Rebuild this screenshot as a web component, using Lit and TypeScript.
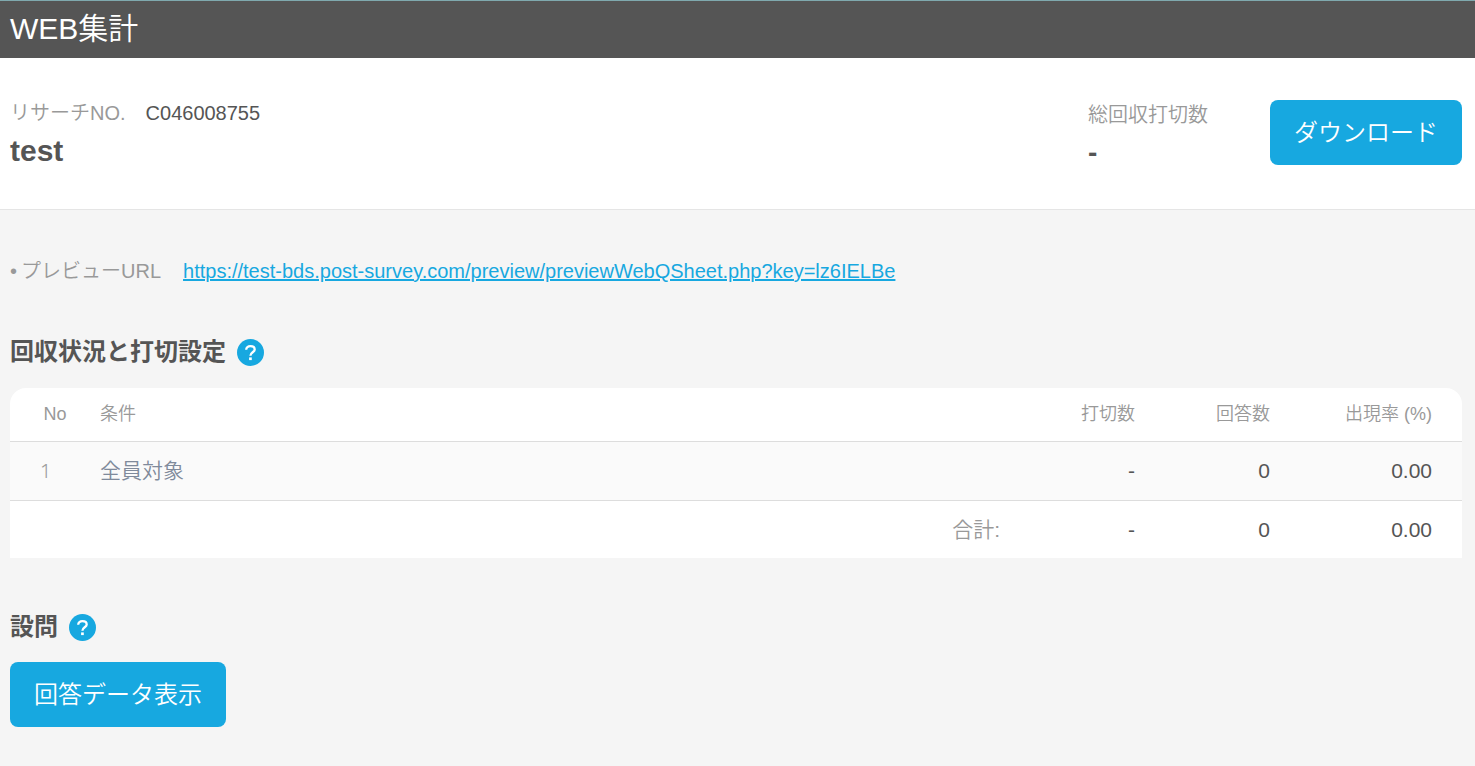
import { LitElement, html, css } from "lit";
import { customElement } from "lit/decorators.js";

@customElement("help-button")
class HelpButton extends LitElement {
  static styles = css`
    :host {
      display: inline-flex;
    }
    .help {
      display: block;
      width: 27px;
      height: 27px;
      padding: 0;
      border: 0;
      border-radius: 50%;
      background: #17a8e0;
      cursor: pointer;
    }
    .icon {
      display: block;
      width: 27px;
      height: 27px;
    }
  `;

  render() {
    return html`
      <button class="help" type="button" aria-label="ヘルプ">
        <svg class="icon" viewBox="0 0 27 27" aria-hidden="true">
          <path
            d="M9.2 10.7C9.2 8.4 11 7.1 13.4 7.1C16 7.1 17.7 8.4 17.7 10.4C17.7 13.2 13.4 13.4 13.4 16.8"
            fill="none"
            stroke="#fff"
            stroke-width="2.3"
          />
          <rect x="12.1" y="18.4" width="2.7" height="2.7" fill="#fff" />
        </svg>
      </button>
    `;
  }
}

@customElement("app-root")
class AppRoot extends LitElement {
  static styles = css`
    :host {
      display: block;
      min-height: 100vh;
      background: #f5f5f5;
      color: #555;
      font: 350 20px/30px "Liberation Sans", "Noto Sans CJK JP", sans-serif;
    }
    .bar {
      padding: 8px 10px 9px;
      border-top: 1px solid #7fa9ae;
      background: #555;
      color: #fff;
    }
    .bar-title {
      margin: 0;
      font-size: 30px;
      line-height: 40px;
      font-weight: 350;
    }
    .summary {
      display: flex;
      align-items: flex-start;
      padding: 42px 13px 34px 10px;
      border-bottom: 1px solid #e5e5e5;
      background: #fff;
    }
    .project {
      flex: 1;
    }
    .line {
      display: flex;
      gap: 20px;
      margin: 0;
      line-height: 26px;
    }
    .label {
      color: #999;
    }
    .name {
      margin: 5px 0 0;
      font-size: 30px;
      line-height: 40px;
      font-weight: 700;
    }
    .limit {
      width: 182px;
    }
    .limit .label {
      line-height: 30px;
    }
    .limit-value {
      font-size: 28px;
      line-height: 45px;
      font-weight: 700;
    }
    .button {
      display: block;
      height: 65px;
      padding: 0 24px;
      border: 0;
      border-radius: 8px;
      background: #17a8e0;
      color: #fff;
      font: inherit;
      font-size: 24px;
      cursor: pointer;
    }
    .content {
      padding: 46px 13px 39px 10px;
    }
    .preview {
      display: flex;
      align-items: center;
      gap: 22px;
      margin: 0;
    }
    .preview .label {
      display: flex;
      gap: 4px;
    }
    .link {
      color: #17a8e0;
      text-decoration-thickness: 2px;
    }
    .heading {
      display: flex;
      align-items: center;
      gap: 11px;
      margin: 48px 0 17px;
      font-size: 24px;
      line-height: 36px;
      font-weight: 700;
    }
    .heading-text {
      margin: 0;
      font: inherit;
    }
    .table {
      width: 100%;
      margin: 18px 0 51px;
      table-layout: fixed;
      border-collapse: separate;
      border-spacing: 0;
      border-radius: 16px 16px 0 0;
      overflow: hidden;
      background: #fff;
      font-size: 21px;
      line-height: 28px;
    }
    .table th,
    .table td {
      padding: 15px 0 15px 30px;
      text-align: right;
      font-weight: 350;
    }
    .table th {
      padding: 12px 0 13px 30px;
      border-bottom: 1px solid #ddd;
      color: #999;
      font-size: 18px;
    }
    .table tfoot td {
      padding-bottom: 14px;
    }
    .table th:last-child,
    .table td:last-child {
      padding-right: 30px;
    }
    .table .no {
      width: 30px;
      text-align: center;
    }
    .table tbody td {
      border-bottom: 1px solid #ddd;
      background: #fafafa;
    }
    .table td.index {
      text-align: left;
      color: #999;
      font-size: 20px;
      font-family: "Noto Sans", sans-serif;
    }
    .table .left {
      text-align: left;
    }
    .table td.left {
      color: #7f8a9b;
    }
    .table .count {
      width: 105px;
    }
    .table .rate {
      width: 132px;
    }
    .table .total {
      color: #999;
    }
  `;

  render() {
    return html`
      <header class="bar"><h1 class="bar-title">WEB集計</h1></header>
      <section class="summary">
        <div class="project">
          <p class="line">
            <span class="label">リサーチNO.</span><span>C046008755</span>
          </p>
          <h2 class="name">test</h2>
        </div>
        <div class="limit">
          <div class="label">総回収打切数</div>
          <div class="limit-value">-</div>
        </div>
        <button class="button" type="button">ダウンロード</button>
      </section>
      <main class="content">
        <p class="preview">
          <span class="label"><span>•</span><span>プレビューURL</span></span>
          <a
            class="link"
            href="https://test-bds.post-survey.com/preview/previewWebQSheet.php?key=lz6IELBe"
            >https://test-bds.post-survey.com/preview/previewWebQSheet.php?key=lz6IELBe</a
          >
        </p>
        <div class="heading">
          <h2 class="heading-text">回収状況と打切設定</h2>
          <help-button></help-button>
        </div>
        <table class="table">
          <thead>
            <tr>
              <th class="no">No</th>
              <th class="left">条件</th>
              <th class="count">打切数</th>
              <th class="count">回答数</th>
              <th class="rate">出現率 (%)</th>
            </tr>
          </thead>
          <tbody>
            <tr>
              <td class="index">1</td>
              <td class="left">全員対象</td>
              <td>-</td>
              <td>0</td>
              <td>0.00</td>
            </tr>
          </tbody>
          <tfoot>
            <tr>
              <td class="total" colspan="2">合計:</td>
              <td>-</td>
              <td>0</td>
              <td>0.00</td>
            </tr>
          </tfoot>
        </table>
        <div class="heading">
          <h2 class="heading-text">設問</h2>
          <help-button></help-button>
        </div>
        <button class="button" type="button">回答データ表示</button>
      </main>
    `;
  }
}
